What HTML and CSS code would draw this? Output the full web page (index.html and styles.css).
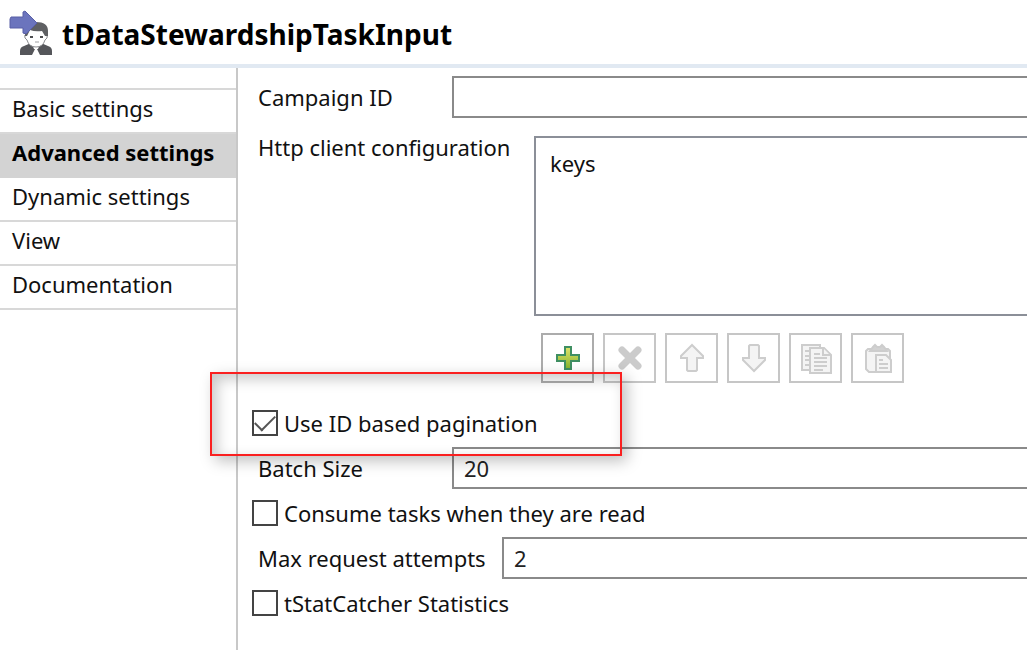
FILE: index.html
```html
<!DOCTYPE html>
<html lang="en">
<head>
    <meta charset="UTF-8">
    <meta name="viewport" content="width=device-width, initial-scale=1.0">
    <title>tDataStewardshipTaskInput</title>
    <link rel="stylesheet" href="styles.css">
</head>
<body>
    <header class="header">
        <svg class="logo" viewBox="0 0 44 44" aria-hidden="true">
            <path d="M10 43v-4q0-4 4-5l7-3h10l7 3q4 1 4 5v4H30l-3-6h-2l-3 6z" fill="#55565a"/>
            <path d="M22 32h8l-2 5h-4z" fill="#fff"/>
            <path d="M16 22q-2 1-1 4l2 2q2 7 9 7t9-7l2-2q1-3-1-4l-3-5H20z" fill="#fff" stroke="#8a8b8e"/>
            <path d="M15 22v-4q1-7 11-8 12 0 12 9v5h-3l-3-5q-7 1-12-1l-3 6h-2z" fill="#5f6063"/>
            <path d="M20 24h3v2h-3zM30 24h3v2h-3z" fill="#4c4d50"/>
            <path d="M25 30h4" stroke="#a0a1a4"/>
            <path d="M1 5h12V0l2-1 12 12-11 11-3-1v-5H1L0 16V7z" fill="#6b74bd" stroke="#595fa6"/>
        </svg>
        <h1 class="title">tDataStewardshipTaskInput</h1>
    </header>

    <div class="container">
        <nav class="sidebar">
            <ul class="tabs">
                <li><a href="#basic">Basic settings</a></li>
                <li><a href="#advanced" class="active">Advanced settings</a></li>
                <li><a href="#dynamic">Dynamic settings</a></li>
                <li><a href="#view">View</a></li>
                <li><a href="#documentation">Documentation</a></li>
            </ul>
        </nav>

        <main class="content">
            <div class="row">
                <label class="label" for="campaign">Campaign ID</label>
                <input class="field" type="text" id="campaign">
            </div>

            <div class="config">
                <span class="config-label" id="config-label">Http client configuration</span>
                <div class="config-body">
                    <div class="list">
                        <table aria-labelledby="config-label">
                            <thead>
                                <tr><th>keys</th></tr>
                            </thead>
                        </table>
                    </div>
                    <div class="toolbar">
                        <button type="button" class="tool-btn enabled" aria-label="Add">
                            <svg viewBox="0 0 32 32">
                                <defs>
                                    <linearGradient id="plus" x1="0" y1="0" x2="0" y2="1">
                                        <stop offset="0" stop-color="#dfe36a"/>
                                        <stop offset="1" stop-color="#86b32c"/>
                                    </linearGradient>
                                </defs>
                                <path d="M13 5h6v8h8v6h-8v8h-6v-8H5v-6h8z" fill="url(#plus)" stroke="#3f8f62" stroke-width="2"/>
                            </svg>
                        </button>
                        <button type="button" class="tool-btn" aria-label="Remove" disabled>
                            <svg viewBox="0 0 32 32">
                                <path d="M8 8l16 16M24 8L8 24" fill="none" stroke="#cbcbcb" stroke-width="7" stroke-linecap="round"/>
                            </svg>
                        </button>
                        <button type="button" class="tool-btn" aria-label="Move up" disabled>
                            <svg viewBox="0 0 32 32">
                                <path d="M16 3L5 14v2h6v12l1 1h8l1-1V16h6v-2z"/>
                            </svg>
                        </button>
                        <button type="button" class="tool-btn" aria-label="Move down" disabled>
                            <svg viewBox="0 0 32 32">
                                <path d="M16 29L5 18v-2h6V4l1-1h8l1 1v12h6v2z"/>
                            </svg>
                        </button>
                        <button type="button" class="tool-btn" aria-label="Copy" disabled>
                            <svg viewBox="0 0 32 32">
                                <path d="M2 3h18v25H2zM5 9h4M5 14h4M5 18h4M5 23h4"/>
                                <path d="M10 6h14l7 7v18H10z"/>
                                <path d="M23 6v7h7M14 12h6M14 16h13M14 20h13M14 24h13M14 28h9"/>
                            </svg>
                        </button>
                        <button type="button" class="tool-btn" aria-label="Paste" disabled>
                            <svg viewBox="0 0 32 32">
                                <path d="M6 7h20l2 2v21H7l-3-3V9z"/>
                                <path d="M8 9l3-4 2-2 2 2h3l2-2 2 2 3 4z" fill="#d2d2d2"/>
                                <path d="M14 13h10l5 5v12H14zM17 18h4M17 22h9M17 26h9"/>
                            </svg>
                        </button>
                    </div>
                </div>
            </div>

            <div class="row check-row highlight">
                <input type="checkbox" class="check" id="pagination" checked>
                <label for="pagination">Use ID based pagination</label>
            </div>
            <div class="row">
                <label class="label" for="batch">Batch Size</label>
                <input class="field" type="text" id="batch" value="20">
            </div>
            <div class="row check-row">
                <input type="checkbox" class="check" id="consume">
                <label for="consume">Consume tasks when they are read</label>
            </div>
            <div class="row">
                <label class="label wide" for="attempts">Max request attempts</label>
                <input class="field" type="text" id="attempts" value="2">
            </div>
            <div class="row check-row">
                <input type="checkbox" class="check" id="stats">
                <label for="stats">tStatCatcher Statistics</label>
            </div>
        </main>
    </div>
</body>
</html>
```

FILE: styles.css
```css
* {
    box-sizing: border-box;
}

body {
    margin: 0;
    font-family: "Noto Sans", "Open Sans", sans-serif;
    font-size: 22px;
    line-height: 30px;
    color: #111;
    background: #fff;
}

.header {
    display: flex;
    align-items: center;
    gap: 8px;
    height: 68px;
    padding: 4px 10px 0;
    border-bottom: 4px solid #e1e9f2;
}

.logo {
    width: 44px;
    height: 44px;
    overflow: visible;
}

.title {
    margin: 0;
    font-size: 28px;
    line-height: 40px;
    font-weight: bold;
    color: #000;
}

.container {
    display: flex;
    min-height: calc(100vh - 68px);
}

.sidebar {
    flex: 0 0 238px;
    padding-top: 20px;
    border-right: 2px solid #c8c8c8;
}

.tabs {
    margin: 0;
    padding: 0;
    list-style: none;
    border-top: 2px solid #d8d8d8;
}

.tabs a {
    display: block;
    height: 44px;
    padding: 4px 12px;
    border-bottom: 2px solid #d8d8d8;
    line-height: 28px;
    color: #111;
    text-decoration: none;
}

.tabs .active {
    background: #d3d3d3;
    border-color: #d3d3d3;
    font-weight: bold;
    color: #000;
}

.content {
    flex: 1;
    min-width: 0;
    padding: 8px 0 0 14px;
}

.row {
    display: flex;
    align-items: center;
    height: 42px;
}

.label {
    flex: 0 0 200px;
    padding-left: 6px;
}

.label.wide {
    flex-basis: 250px;
}

/* fields run off the right edge of the view */
.field {
    flex: 1;
    min-width: 0;
    height: 42px;
    padding: 0 10px;
    border: 2px solid #8a8a8a;
    border-right: 0;
    border-radius: 0;
    background: #fff;
    font: inherit;
    color: #222;
    outline: none;
}

.config {
    display: flex;
    padding: 14px 0 16px;
}

.config-label {
    flex: 0 0 282px;
    padding-left: 6px;
    white-space: nowrap;
}

.config-body {
    flex: 1;
    min-width: 0;
    padding-top: 4px;
}

.list {
    height: 180px;
    padding: 10px 14px;
    border: 2px solid #8b8f98;
    border-right: 0;
}

.list table {
    border-collapse: collapse;
}

.list th {
    padding: 0;
    font-weight: normal;
}

.toolbar {
    display: flex;
    gap: 9px;
    padding: 17px 7px 0;
}

.tool-btn {
    display: flex;
    align-items: center;
    justify-content: center;
    width: 53px;
    height: 50px;
    padding: 0;
    border: 2px solid #c6c6c6;
    background: #fff;
}

.tool-btn.enabled {
    border-color: #acacac;
}

.tool-btn svg {
    width: 32px;
    height: 32px;
    fill: #f4f4f4;
    stroke: #cdcdcd;
    stroke-width: 2;
}

.check-row {
    height: 48px;
    gap: 6px;
}

.check {
    appearance: none;
    width: 26px;
    height: 26px;
    margin: 0;
    border: 2px solid #444;
    background: #fff;
}

.check:checked {
    display: grid;
    place-items: center;
}

.check:checked::before {
    content: "";
    width: 18px;
    height: 9px;
    margin-bottom: 5px;
    border: solid #555;
    border-width: 0 0 2px 2px;
    transform: rotate(-45deg);
}

.highlight {
    position: relative;
}

.highlight::after {
    content: "";
    position: absolute;
    box-sizing: border-box;
    top: -27px;
    left: -42px;
    width: 412px;
    height: 84px;
    border: 2px solid #fa2020;
    box-shadow: 5px 5px 14px rgba(0, 0, 0, 0.25), inset 5px 5px 14px rgba(0, 0, 0, 0.22);
    pointer-events: none;
}
```
